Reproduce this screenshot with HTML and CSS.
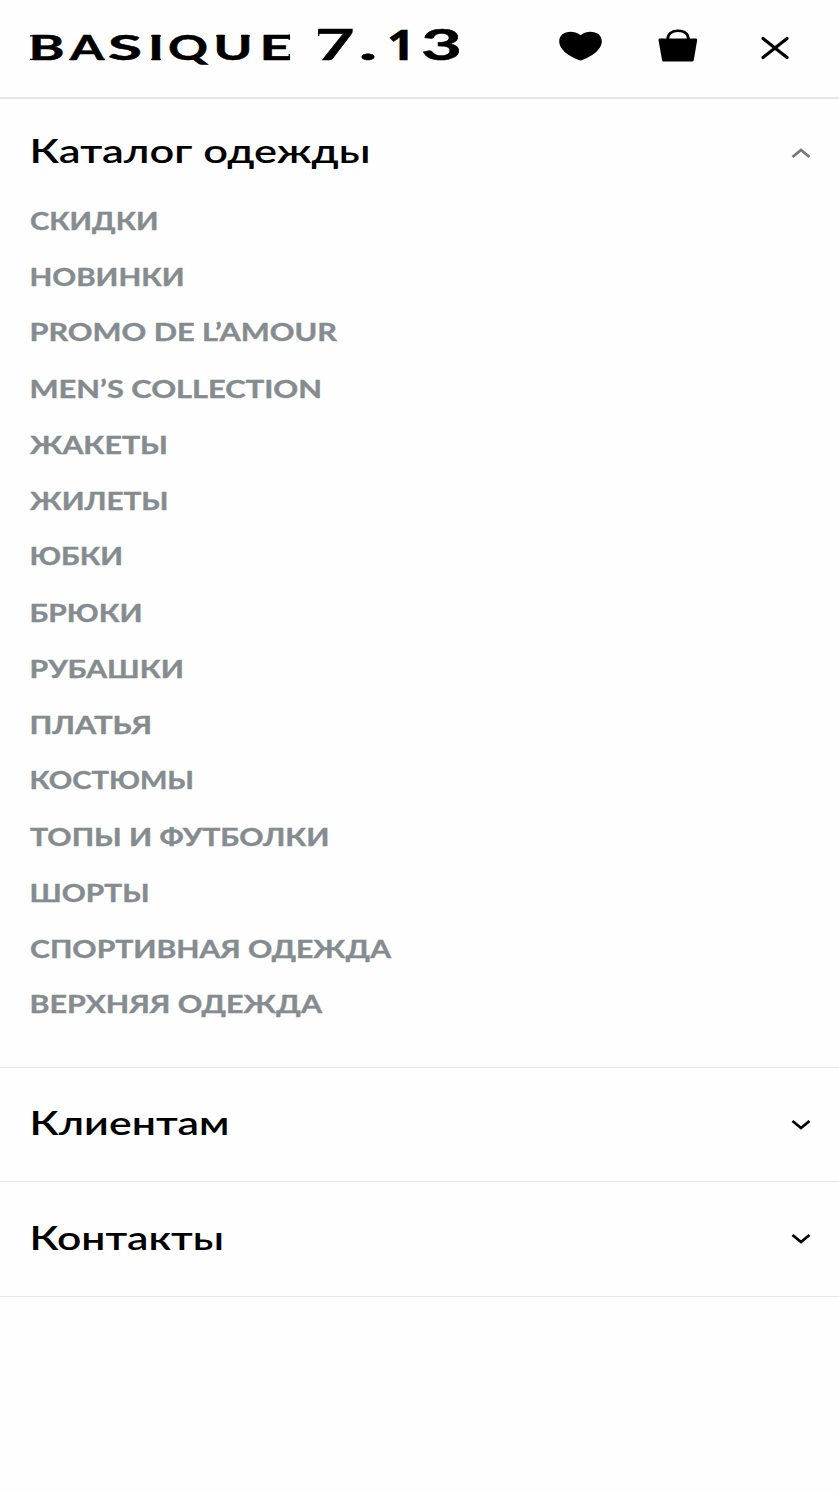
FILE: index.html
```html
<!DOCTYPE html>
<html lang="ru">
<head>
<meta charset="utf-8">
<title>BASIQUE 7.13</title>
<link rel="stylesheet" href="styles.css">
</head>
<body>
<header class="header">
  <svg class="logo" width="440" height="97" role="img" aria-label="BASIQUE 7.13">
    <g class="logo-name">
      <text x="28.500" y="60" textLength="36" lengthAdjust="spacingAndGlyphs">B</text>
      <text x="70" y="60" textLength="34" lengthAdjust="spacingAndGlyphs">A</text>
      <text x="108" y="60" textLength="34" lengthAdjust="spacingAndGlyphs">S</text>
      <text x="148" y="60" textLength="16" lengthAdjust="spacingAndGlyphs">I</text>
      <text x="168" y="60" textLength="40" lengthAdjust="spacingAndGlyphs">Q</text>
      <text x="213.500" y="60" textLength="39" lengthAdjust="spacingAndGlyphs">U</text>
      <text x="259.500" y="60" textLength="32" lengthAdjust="spacingAndGlyphs">E</text>
    </g>
    <g class="logo-number">
      <text x="315.500" y="60" textLength="39" lengthAdjust="spacingAndGlyphs">7</text>
      <text x="358.500" y="60" textLength="19" lengthAdjust="spacingAndGlyphs">.</text>
      <text class="one" x="387" y="60" textLength="28" lengthAdjust="spacingAndGlyphs">1</text>
      <text x="421" y="60" textLength="41" lengthAdjust="spacingAndGlyphs">3</text>
    </g>
    <path class="serifs" d="M30 35.800H36M30 59.300H36M69 59.300H76M98 59.300H105M151 35.800H161M151 59.300H161M216 35.800H225M241 35.800H250M289.300 34.500V40M289.300 54V60M318.700 30V36"/>
  </svg>
  <nav class="actions">
    <svg width="44" height="30" viewBox="0 0 44 30"><path d="M21.500 4.300C18 1.500 15 .8 11.500 .8 5 .8 .2 4.500 .2 10.300c0 9 12 16.500 21.300 19.200 9.300-2.700 21.300-10.200 21.300-19.200C42.800 4.500 38 .8 31.500 .8 28 .8 25 1.500 21.500 4.300Z"/></svg>
    <svg class="bag" width="40" height="34" viewBox="0 0 40 34"><path d="M1.500 10.500H38Q39.500 10.500 39.200 12L35.800 32Q35.500 33.500 34 33.500H5.500Q4.200 33.500 4 32L.5 12Q.3 10.500 1.500 10.500Z"/><path class="handle" d="M9.500 12C9.500 5.500 14 2.800 20 2.800S30.500 5.500 30.500 12"/></svg>
    <svg class="close" width="30" height="26" viewBox="0 0 30 26"><path d="M3 3.500 27 22.500M27 3.500 3 22.500"/></svg>
  </nav>
</header>
<main>
  <section class="group catalog">
    <div class="group-head">
      <svg class="title" width="400" height="60"><text x="29.500" y="39.500" textLength="341" lengthAdjust="spacingAndGlyphs">Каталог одежды</text></svg>
      <svg class="chevron open" width="20" height="12"><path d="M1.500 10 10 3 18.500 10"/></svg>
    </div>
    <ul class="links">
      <li><svg><text x="30" y="38" textLength="128.500" lengthAdjust="spacingAndGlyphs">СКИДКИ</text></svg></li>
      <li><svg><text x="29.500" y="38" textLength="155" lengthAdjust="spacingAndGlyphs">НОВИНКИ</text></svg></li>
      <li><svg><text x="29.500" y="37.300" textLength="307.500" lengthAdjust="spacingAndGlyphs">PROMO DE L’AMOUR</text></svg></li>
      <li><svg><text x="29.500" y="38" textLength="292.500" lengthAdjust="spacingAndGlyphs">MEN’S COLLECTION</text></svg></li>
      <li><svg><text x="30" y="38" textLength="138" lengthAdjust="spacingAndGlyphs">ЖАКЕТЫ</text></svg></li>
      <li><svg><text x="30" y="38" textLength="138.500" lengthAdjust="spacingAndGlyphs">ЖИЛЕТЫ</text></svg></li>
      <li><svg><text x="29.500" y="37" textLength="93.500" lengthAdjust="spacingAndGlyphs">ЮБКИ</text></svg></li>
      <li><svg><text x="29.500" y="38" textLength="113" lengthAdjust="spacingAndGlyphs">БРЮКИ</text></svg></li>
      <li><svg><text x="29.500" y="38" textLength="154.500" lengthAdjust="spacingAndGlyphs">РУБАШКИ</text></svg></li>
      <li><svg><text x="29.500" y="38" textLength="122.500" lengthAdjust="spacingAndGlyphs">ПЛАТЬЯ</text></svg></li>
      <li><svg><text x="29.500" y="37" textLength="164.500" lengthAdjust="spacingAndGlyphs">КОСТЮМЫ</text></svg></li>
      <li><svg><text x="30" y="38" textLength="299.500" lengthAdjust="spacingAndGlyphs">ТОПЫ И ФУТБОЛКИ</text></svg></li>
      <li><svg><text x="29.500" y="38" textLength="120" lengthAdjust="spacingAndGlyphs">ШОРТЫ</text></svg></li>
      <li><svg><text x="30" y="38" textLength="361" lengthAdjust="spacingAndGlyphs">СПОРТИВНАЯ ОДЕЖДА</text></svg></li>
      <li><svg><text x="29.500" y="37" textLength="292.500" lengthAdjust="spacingAndGlyphs">ВЕРХНЯЯ ОДЕЖДА</text></svg></li>
    </ul>
  </section>
  <section class="group clients">
    <div class="group-head">
      <svg class="title" width="400" height="60"><text x="29.500" y="40" textLength="200" lengthAdjust="spacingAndGlyphs">Клиентам</text></svg>
      <svg class="chevron" width="20" height="12"><path d="M1.500 2 10 9 18.500 2"/></svg>
    </div>
  </section>
  <section class="group">
    <div class="group-head">
      <svg class="title" width="400" height="60"><text x="29.500" y="41" textLength="194.500" lengthAdjust="spacingAndGlyphs">Контакты</text></svg>
      <svg class="chevron" width="20" height="12"><path d="M1.500 2 10 9 18.500 2"/></svg>
    </div>
  </section>
</main>
</body>
</html>
```
FILE: styles.css
```css
* { box-sizing: border-box; }
body {
  margin: 0;
  background: #fefefe;
  color: #000;
  font-family: Lato, "Noto Sans", sans-serif;
}
svg { display: block; overflow: visible; flex: none; }
.header {
  display: flex;
  justify-content: space-between;
  height: 99px;
  padding-right: 49px;
  border-bottom: 2px solid #e6e6e6;
}
.logo-name, .logo-number { font-weight: 700; stroke: #000; stroke-width: .5px; }
.logo-name { font-size: 34.500px; }
.logo-number { font-size: 41.500px; }
.one { font-family: "Open Sans", sans-serif; }
.serifs { fill: none; stroke: #000; stroke-width: 1.3; }
.actions { display: flex; align-items: flex-start; padding-top: 31px; }
.bag { margin: -3px 0 0 55px; }
.handle { fill: none; stroke: #000; stroke-width: 2.6; }
.close { margin: 4px 0 0 62px; }
.close path { fill: none; stroke: #000; stroke-width: 3.2; stroke-linecap: round; }
.group { height: 115px; padding-top: 27px; border-bottom: 1px solid #e6e6e6; }
.catalog { height: 969px; padding-top: 24px; }
.clients { height: 114px; }
.group-head { display: flex; align-items: center; justify-content: space-between; height: 60px; padding-right: 28px; }
.title { font-size: 32.500px; font-weight: 600; }
.chevron path { fill: none; stroke: #000; stroke-width: 2.8; }
.chevron.open path { stroke: #777; }
.links { margin: 9px 0 0; padding: 0; list-style: none; }
.links li { height: 56px; }
.links svg { width: 420px; height: 56px; }
.links text { fill: #858c8f; stroke: #858c8f; stroke-width: .4px; font-size: 24px; font-weight: 700; }
```
